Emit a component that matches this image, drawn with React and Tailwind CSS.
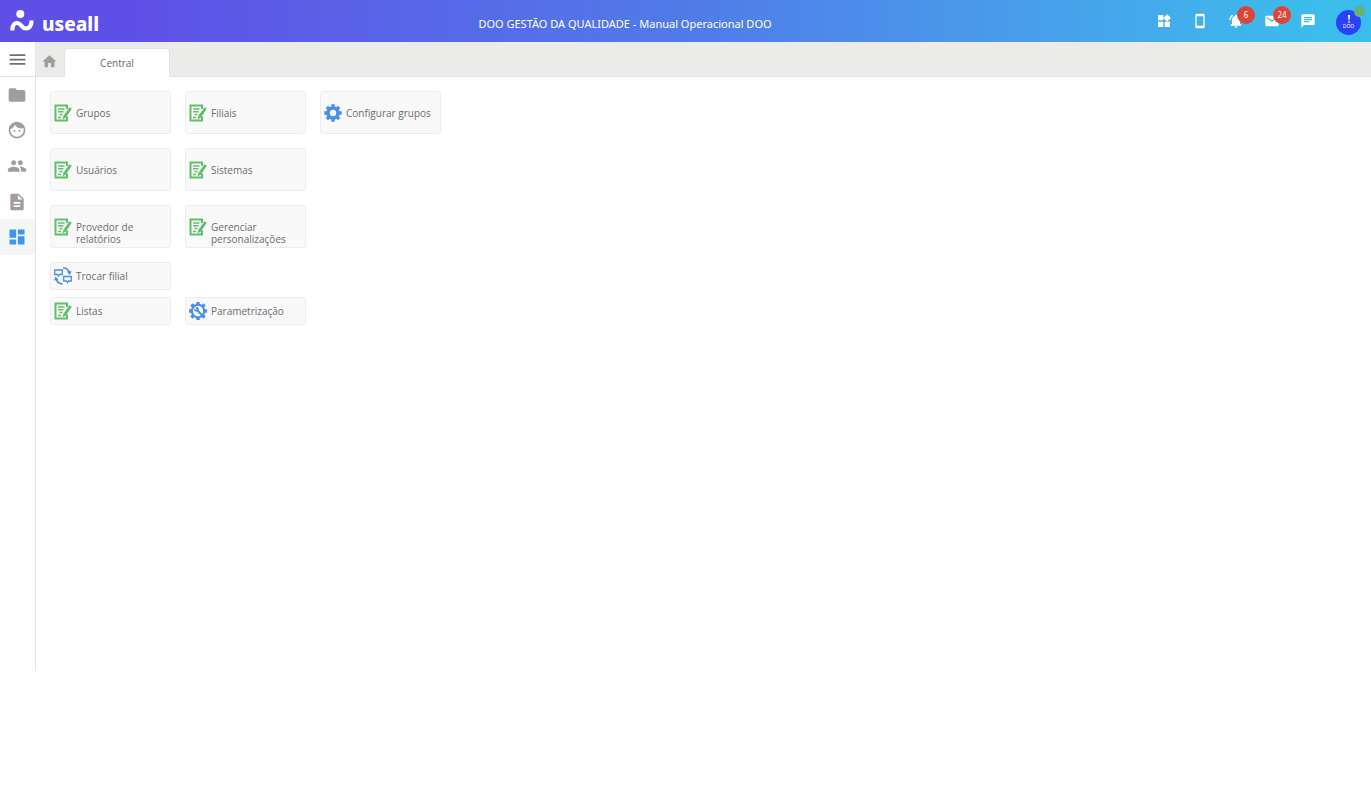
import React from "react";
import {
  MdChat,
  MdDashboard,
  MdDescription,
  MdFace,
  MdFolder,
  MdHome,
  MdMail,
  MdMenu,
  MdNotificationsActive,
  MdPeople,
  MdStayCurrentPortrait,
  MdWidgets,
} from "react-icons/md";

const FormIcon = ({ className }) => (
  <svg viewBox="0 0 18 18" fill="none" className={className}>
    <path d="M13 5V1.500H1.500v15H13v-4" stroke="#62bf69" strokeWidth="2" />
    <path
      d="M4 5h6.500M4 7.800h5.500M5.500 10.500h3M4 13.500h3"
      stroke="#62bf69"
      strokeWidth="1.400"
    />
    <path d="M15.500 3.200l2.300 1.500-5.900 8.900-3.300 2 .7-3.600z" fill="#62bf69" />
  </svg>
);

const GearIcon = ({ className }) => (
  <svg viewBox="0 0 18 18" fill="none" className={className}>
    <circle cx="9" cy="9" r="5" stroke="#4a8fe3" strokeWidth="3.600" />
    <path
      d="M9 .3v3M9 14.700v3M.3 9h3M14.700 9h3M2.900 2.900L5 5M13 13l2.100 2.100M2.900 15.100L5 13M13 5l2.100-2.100"
      stroke="#4a8fe3"
      strokeWidth="3.400"
    />
  </svg>
);

const GearToolIcon = ({ className }) => (
  <svg viewBox="0 0 18 18" fill="none" className={className}>
    <circle cx="9" cy="9" r="6.200" stroke="#4a8fe3" strokeWidth="2.100" />
    <path
      d="M9 0v2.400M9 15.600V18M0 9h2.400M15.600 9H18M2.400 2.400l2 2M13.600 13.600l2 2M2.400 15.600l2-2M13.600 4.400l2-2"
      stroke="#4a8fe3"
      strokeWidth="3.400"
    />
    <path d="M8.500 8.500l4 4.200" stroke="#4a8fe3" strokeWidth="2.200" />
    <path
      d="M6.200 5.400l1.700 1.700-.9.900-1.800-1.700c-.5 1.400.1 2.600 1.100 3.100 1.900.8 4-.9 3.500-2.800C9.500 5.300 7.900 4.600 6.200 5.400z"
      fill="#4a8fe3"
    />
  </svg>
);

const SwapIcon = ({ className }) => (
  <svg viewBox="0 0 18 18" fill="none" stroke="#4a8fe3" className={className}>
    <path d="M.7 3h7.600v4.500H5.500L4.500 9l-1-1.500H.7z" strokeWidth="1.300" />
    <path d="M9.700 9.500h7.600V14h-2.800l-1 1.500-1-1.500H9.700z" strokeWidth="1.300" />
    <path
      d="M9 1c3.300 0 5.800 1.800 6.500 4.900M1.900 11.500c.8 3 3.200 5.300 6.800 5.500"
      strokeWidth="1.700"
    />
    <path
      d="M12.800 4.600l2.900 3.400 2-3.700zM.1 13.400l1.300-3.900 3.200 2.900z"
      fill="#4a8fe3"
      stroke="none"
    />
  </svg>
);

const topActions = [
  { label: "Aplicativos", icon: MdWidgets },
  { label: "Celular", icon: MdStayCurrentPortrait },
  { label: "Notificações", icon: MdNotificationsActive, count: 6 },
  { label: "Mensagens", icon: MdMail, count: 24 },
  { label: "Chat", icon: MdChat },
];

const menuItems = [
  { label: "Arquivos", icon: MdFolder },
  { label: "Clientes", icon: MdFace },
  { label: "Pessoas", icon: MdPeople },
  { label: "Documentos", icon: MdDescription },
  { label: "Central", icon: MdDashboard, active: true },
];

const cardRows = [
  [
    { title: "Grupos", icon: FormIcon },
    { title: "Filiais", icon: FormIcon },
    { title: "Configurar grupos", icon: GearIcon },
  ],
  [
    { title: "Usuários", icon: FormIcon },
    { title: "Sistemas", icon: FormIcon },
  ],
  [
    { title: "Provedor de relatórios", icon: FormIcon },
    { title: "Gerenciar personalizações", icon: FormIcon },
  ],
];

const Logo = () => (
  <a href="#" aria-label="useall" className="flex items-center gap-2 pl-[10px] text-white">
    <svg viewBox="0 0 24 22" fill="none" className="h-[22px] w-6">
      <circle cx="10.300" cy="4" r="4" fill="white" />
      <path
        d="M2.300 20.500c0-4.500 1.700-7.500 4.600-7.500 4.600 0 4.600 5.500 9 5.500 3.700 0 5.500-3.300 5.700-8"
        stroke="white"
        strokeWidth="4.200"
      />
    </svg>
    <span className="pt-[6px] font-['Noto_Sans',sans-serif] text-[19px] font-extrabold leading-5">
      useall
    </span>
  </a>
);

const Header = () => (
  <header className="flex h-[42px] items-center bg-linear-to-r from-[#5e50e6] from-10% via-[#507ae8] via-50% to-[#3bbdec] to-97%">
    <div className="w-[104px]">
      <Logo />
    </div>
    <h1 className="flex-1 pt-[6px] text-center text-[11px] text-white">
      DOO GESTÃO DA QUALIDADE - Manual Operacional DOO
    </h1>
    <div className="flex items-center">
      {topActions.map(({ label, icon: Icon, count }) => (
        <button
          key={label}
          aria-label={label}
          className="relative flex h-9 w-9 items-center justify-center text-white">
          <Icon className="h-4 w-4" />
          {count && (
            <span className="absolute left-[19px] top-[3px] flex h-[18px] w-[18px] items-center justify-center rounded-full bg-[#dc4539] text-[8px]">
              {count}
            </span>
          )}
        </button>
      ))}
      <button
        aria-label="Perfil"
        className="relative mx-[10px] mt-[2px] flex h-[25px] w-[25px] flex-col items-center justify-center rounded-full bg-[#2b40fb] text-white">
        <svg viewBox="0 0 4 9" className="h-2 w-1">
          <path d="M.8 0h2.400L2.600 6H1.400z" fill="white" />
          <circle cx="2" cy="8" r="1" fill="white" />
        </svg>
        <span className="text-[5px] leading-[6px]">DOO</span>
        <span className="absolute -right-1 -top-1 h-[11px] w-[11px] rounded-full bg-[#67b36b]" />
      </button>
    </div>
  </header>
);

const Sidebar = () => (
  <nav className="w-9 shrink-0 border-r border-[#e4e4e7]">
    <button
      aria-label="Menu"
      className="flex h-[35px] w-full items-center justify-center border-b border-[#e4e4e7] pr-px text-[#766d6d]">
      <MdMenu className="h-[21px] w-[21px]" stroke="currentColor" />
    </button>
    <div className="grid h-[178px] grid-rows-5">
      {menuItems.map(({ label, icon: Icon, active }) => (
        <a
          key={label}
          href="#"
          aria-label={label}
          className={`flex items-center justify-center pr-px ${
            active ? "bg-[#f4f6f6] text-[#4296e8]" : "text-[#a39c9c]"
          }`}>
          <Icon className="h-5 w-5" />
        </a>
      ))}
    </div>
  </nav>
);

const TabBar = () => (
  <div className="flex h-[35px] items-end border-b border-[#e0e2ec] bg-[#ebebea]">
    <a
      href="#"
      aria-label="Início"
      className="flex h-full w-7 items-center justify-center pr-px pt-1 text-[#a39c9c]">
      <MdHome className="h-[17px] w-[17px]" />
    </a>
    <button className="-mb-px h-[29px] w-[106px] rounded-t-sm border border-b-0 border-[#e0e2ec] bg-white font-['Open_Sans',sans-serif] text-[10px] text-[#686870]">
      Central
    </button>
  </div>
);

const CARD =
  "flex rounded-[3px] border border-[#ededed] bg-[#f9f9f9] text-left font-['Open_Sans',sans-serif] text-[10px] leading-3";

const Card = ({ title, icon: Icon }) => (
  <button className={`${CARD} h-[43px] items-start gap-1 pl-[3px]`}>
    <Icon className="mt-3 h-[18px] w-[18px] shrink-0" />
    <span className="pt-[15px]">{title}</span>
  </button>
);

const SmallCard = ({ title, icon: Icon }) => (
  <button className={`${CARD} h-7 items-center gap-1 pl-[3px]`}>
    <Icon className="h-[18px] w-[18px] shrink-0" />
    <span>{title}</span>
  </button>
);

const App = () => (
  <div className="flex min-h-screen flex-col bg-white pb-[123px] font-['Noto_Sans',sans-serif] text-[#6d6a70]">
    <Header />
    <div className="flex flex-1">
      <Sidebar />
      <div className="min-w-0 flex-1">
        <TabBar />
        <main className="flex flex-col gap-[14px] p-[14px]">
          {cardRows.map((row) => (
            <div key={row[0].title} className="grid grid-cols-[repeat(3,121px)] gap-[14px]">
              {row.map((card) => (
                <Card key={card.title} {...card} />
              ))}
            </div>
          ))}
          <div className="grid grid-cols-[repeat(2,121px)] gap-x-[14px] gap-y-[7px]">
            <SmallCard title="Trocar filial" icon={SwapIcon} />
            <span />
            <SmallCard title="Listas" icon={FormIcon} />
            <SmallCard title="Parametrização" icon={GearToolIcon} />
          </div>
        </main>
      </div>
    </div>
  </div>
);

export default App;
